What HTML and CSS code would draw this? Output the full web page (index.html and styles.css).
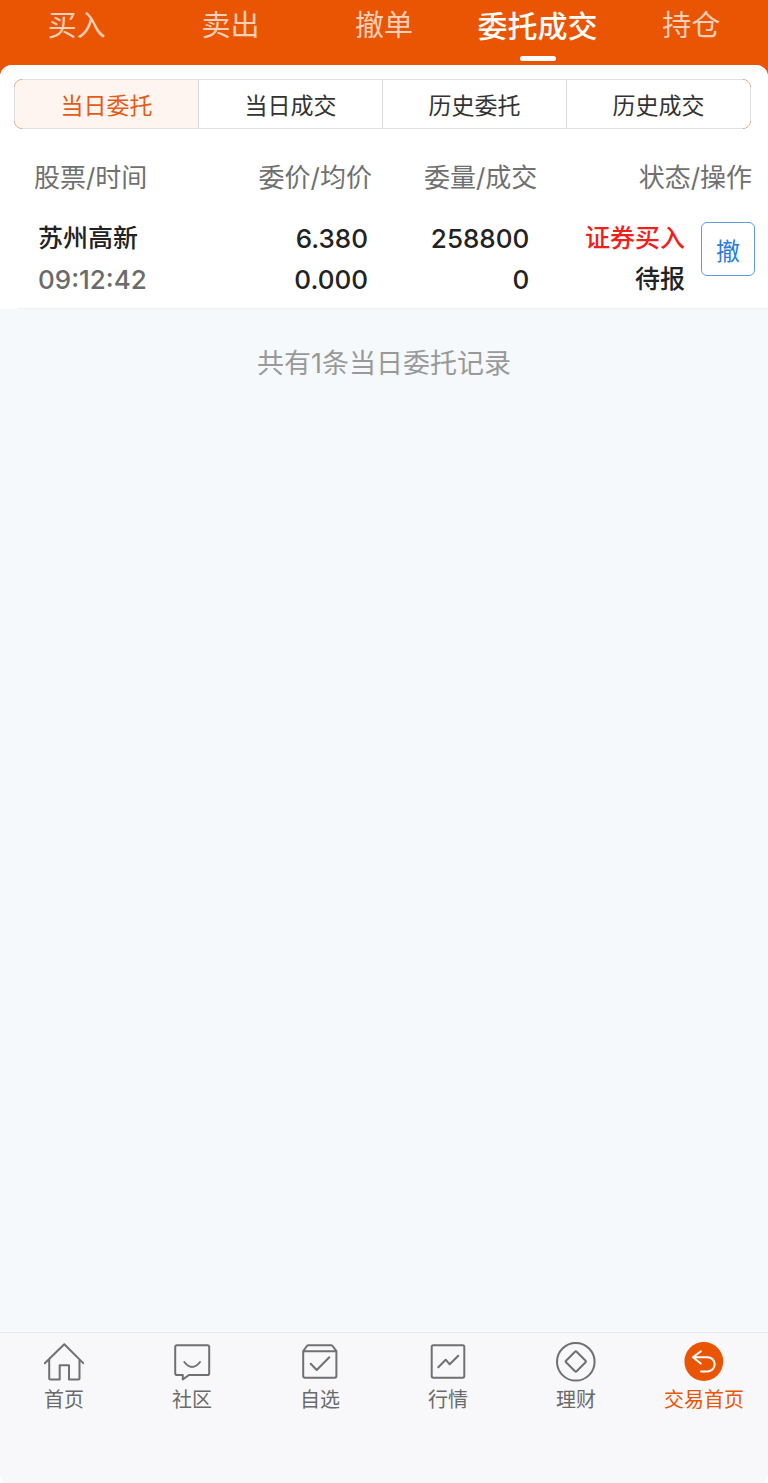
FILE: index.html
```html
<!DOCTYPE html>
<html lang="zh-CN">
<head>
  <meta charset="UTF-8" />
  <meta name="viewport" content="width=device-width, initial-scale=1.0"/>
  <title>委托成交</title>
  <link rel="stylesheet" href="styles.css">
</head>
<body>
  <nav class="top-nav">
    <a href="#buy">买入</a>
    <a href="#sell">卖出</a>
    <a href="#cancel">撤单</a>
    <a href="#orders" class="active">委托成交</a>
    <a href="#position">持仓</a>
  </nav>

  <main class="content">
    <section class="panel">
      <div class="segments">
        <button type="button" class="segment active">当日委托</button>
        <button type="button" class="segment">当日成交</button>
        <button type="button" class="segment">历史委托</button>
        <button type="button" class="segment">历史成交</button>
      </div>

      <table class="orders">
        <colgroup>
          <col class="col-stock">
          <col class="col-price">
          <col class="col-amount">
          <col>
          <col class="col-action">
        </colgroup>
        <thead>
          <tr>
            <th class="stock">股票/时间</th>
            <th>委价/均价</th>
            <th>委量/成交</th>
            <th colspan="2">状态/操作</th>
          </tr>
        </thead>
        <tbody>
          <tr>
            <td class="stock">
              <div>苏州高新</div>
              <div class="num time">09:12:42</div>
            </td>
            <td>
              <div class="num">6.380</div>
              <div class="num">0.000</div>
            </td>
            <td>
              <div class="num">258800</div>
              <div class="num">0</div>
            </td>
            <td>
              <div class="buy">证券买入</div>
              <div>待报</div>
            </td>
            <td class="action"><button type="button" class="cancel-btn">撤</button></td>
          </tr>
        </tbody>
      </table>
    </section>
    <p class="summary">共有1条当日委托记录</p>
  </main>

  <nav class="tab-bar">
    <a href="#home">
      <svg class="icon" viewBox="0 0 40 40" aria-hidden="true">
        <path d="M.8 21.3 20.3 2.2 39.5 21.3M5.2 17.5V36.5Q5.2 37.5 6.2 37.5H15.7V23.3H25V37.5H34.5Q35.5 37.5 35.5 36.5V17.5"/>
      </svg>
      <span>首页</span>
    </a>
    <a href="#community">
      <svg class="icon" viewBox="0 0 40 40" aria-hidden="true">
        <path d="M5 3.2H35.4Q37.2 3.2 37.2 5V31.2Q37.2 33 35.4 33H17L10.8 37.4V33H5Q3.2 33 3.2 31.2V5Q3.2 3.2 5 3.2Z"/>
        <path d="M12.3 20Q20 30 28 20"/>
      </svg>
      <span>社区</span>
    </a>
    <a href="#favorites">
      <svg class="icon" viewBox="0 0 40 40" aria-hidden="true">
        <path d="M3.2 9.2 6.9 4Q7.5 3.2 8.5 3.2H31Q32 3.2 32.6 4L36.4 9.2V34Q36.4 35.7 34.6 35.7H5Q3.2 35.7 3.2 34ZM3.2 9.2H36.4"/>
        <path d="M10.7 21.7 16.7 28 29.3 15.3"/>
      </svg>
      <span>自选</span>
    </a>
    <a href="#market">
      <svg class="icon" viewBox="0 0 40 40" aria-hidden="true">
        <rect x="3.7" y="3.2" width="32.6" height="32.5" rx="1.6"/>
        <path d="M10.3 25.3 17.7 17.7 21.7 22.3 30.3 13.7"/>
      </svg>
      <span>行情</span>
    </a>
    <a href="#wealth">
      <svg class="icon" viewBox="0 0 40 40" aria-hidden="true">
        <circle cx="19.8" cy="19.8" r="18.8"/>
        <path d="M19 9.8Q19.8 9 20.6 9.8L29.6 18.7Q30.4 19.5 29.6 20.3L20.6 29.2Q19.8 30 19 29.2L10 20.3Q9.2 19.5 10 18.7Z"/>
      </svg>
      <span>理财</span>
    </a>
    <a href="#trade" class="active">
      <svg class="icon" viewBox="0 0 40 40" aria-hidden="true">
        <circle class="disc" cx="19.8" cy="19.5" r="19.4"/>
        <path class="arrow" d="M16.9 9.3 8.9 15.2 16.7 21.5M8.9 15.2H23.6A7.1 7.1 0 0 1 23.6 29.4H17"/>
      </svg>
      <span>交易首页</span>
    </a>
  </nav>
</body>
</html>
```
FILE: styles.css
```css
* {
  box-sizing: border-box;
}
body {
  margin: 0;
  min-height: 100vh;
  display: flex;
  flex-direction: column;
  font-family: Inter, "Noto Sans CJK SC", sans-serif;
  color: #222;
  background: #fff;
}
a {
  color: inherit;
  text-decoration: none;
}
button {
  padding: 0;
  font-family: inherit;
  cursor: pointer;
}

/* Top navigation */
.top-nav {
  display: flex;
  height: 80px;
  background: #ea5504;
  color: #fbd0b8;
  font-size: 29px;
  line-height: 52px;
  text-align: center;
}
.top-nav a {
  flex: 1;
}
.top-nav .active {
  color: #fff;
  font-size: 30px;
  font-weight: 500;
}
.top-nav .active::after {
  content: "";
  display: block;
  width: 36px;
  height: 5px;
  margin: 4px auto 0;
  border-radius: 3px;
  background: #fff;
}

.content {
  flex: 1;
  margin-top: -15px;
  border-radius: 12px 12px 0 0;
  background: #f5f9fb;
}
.panel {
  padding-top: 14px;
  border-radius: 12px 12px 0 0;
  background: #fff;
}
.panel::after {
  content: "";
  display: block;
  height: 1px;
  margin-left: 18px;
  background: #eef0f1;
}

/* Segmented control: orange corners, grey sides */
.segments {
  position: relative;
  display: flex;
  height: 50px;
  margin: 0 17px 0 14px;
  border: 1px solid #e2a078;
  border-radius: 8px;
}
.segments::before,
.segments::after {
  content: "";
  position: absolute;
  border: 0 solid #dfe0e4;
  pointer-events: none;
}
.segments::before {
  inset: -1px 7px;
  border-width: 1px 0;
}
.segments::after {
  inset: 7px -1px;
  border-width: 0 1px;
}
.segment {
  flex: 1;
  border: 0;
  border-left: 1px solid #d9dade;
  background: #fff;
  color: #333;
  font-size: 23px;
}
.segment:first-child {
  border-left: 0;
  border-radius: 7px 0 0 7px;
}
.segment:last-child {
  border-radius: 0 7px 7px 0;
}
.segment.active {
  background: #fff5f0;
  color: #e65a14;
}

/* Order list */
.orders {
  width: 100%;
  margin-top: 12px;
  border-collapse: collapse;
  table-layout: fixed;
}
.col-stock {
  width: 27%;
}
.col-price {
  width: 23%;
}
.col-amount {
  width: 21%;
}
.col-action {
  width: 67px;
}
.orders th {
  height: 70px;
  padding: 0 12px 2px 0;
  color: #707070;
  font-size: 26px;
  font-weight: 400;
  text-align: right;
  white-space: nowrap;
}
.orders th:nth-child(3) {
  padding-right: 8px;
}
.orders th:last-child {
  padding-right: 16px;
}
.orders td {
  padding: 7px 16px 8px 0;
  font-size: 25px;
  font-weight: 500;
  line-height: 41px;
  text-align: right;
  vertical-align: top;
  white-space: nowrap;
}
.orders th.stock {
  padding-left: 34px;
  text-align: left;
}
.orders td.stock {
  padding-left: 38px;
  text-align: left;
}
.orders .num {
  font-size: 26px;
}
.orders .time {
  color: #6b6b6b;
}
.orders .buy {
  color: #f0201c;
}
.orders td.action {
  padding: 11px 13px 0 0;
}
.cancel-btn {
  display: block;
  width: 54px;
  height: 54px;
  border: 1px solid #5e9be0;
  border-radius: 6px;
  background: #fff;
  color: #2d7bdc;
  font-size: 24px;
}

.summary {
  margin: 36px 0 0;
  color: #999;
  font-size: 27px;
  line-height: 38px;
  text-align: center;
}

/* Bottom tab bar */
.tab-bar {
  display: flex;
  height: 151px;
  padding-top: 9px;
  border-top: 1px solid #e6e9ec;
  border-radius: 0 0 8px 8px;
  background: #f8f8fb;
  color: #6a6a6a;
  font-size: 20px;
  line-height: 28px;
}
.tab-bar a {
  flex: 1;
  display: flex;
  flex-direction: column;
  align-items: center;
  gap: 4px;
}
.tab-bar .active {
  color: #ea5504;
}
.icon {
  width: 40px;
  height: 40px;
  fill: none;
  stroke: #707072;
  stroke-width: 2;
  stroke-linecap: round;
  stroke-linejoin: round;
}
.icon .disc {
  fill: #ea5504;
  stroke: none;
}
.icon .arrow {
  stroke: #fff;
}
```
